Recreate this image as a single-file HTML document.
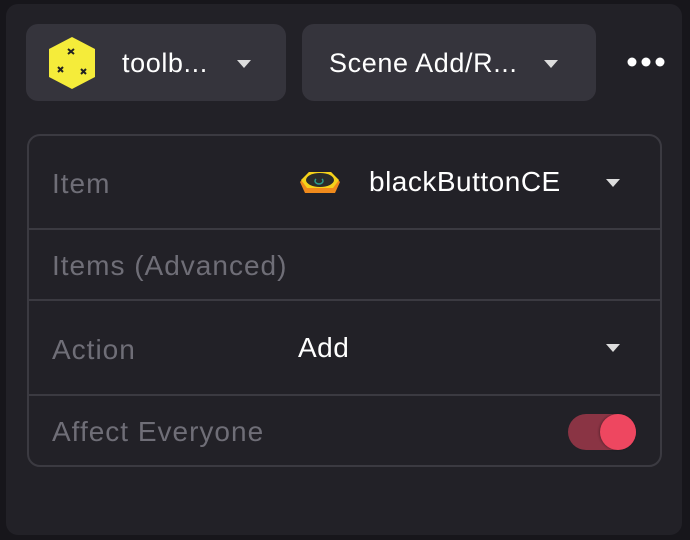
<!DOCTYPE html>
<html><head><style>
*{margin:0;padding:0;box-sizing:border-box}
body{width:690px;height:540px;background:#17161b;font-family:"Liberation Sans",Arial,sans-serif;position:relative;overflow:hidden}
.panel{position:absolute;left:6px;top:4px;width:676px;height:531px;background:#222127;border-radius:12px}
.btn{position:absolute;top:24px;height:77px;background:#35343c;border-radius:12px;color:#fff;font-size:27px;letter-spacing:.6px}
.tri{position:absolute;width:0;height:0;border-left:7px solid transparent;border-right:7px solid transparent;border-top:8px solid #ddd}
.t{position:absolute;white-space:nowrap}
.card{position:absolute;left:27px;top:134px;width:635px;height:333px;border:2px solid #3b3a41;border-radius:13px}
.div{position:absolute;left:27px;width:635px;height:2px;background:#3b3a41}
.lab{position:absolute;left:52px;color:#6f6e77;font-size:28px;letter-spacing:1px;white-space:nowrap}
</style></head><body>
<div class="panel"></div>
<div class="btn" style="left:26px;width:260px">
 <svg style="position:absolute;left:20px;top:11px" width="52" height="56" viewBox="0 0 52 56">
  <polygon points="26,2 49,14 49,42 26,54 3,42 3,14" fill="#f5ec3a"/>
  <path d="M22 14l6 5M28 14l-6 5M12 32l5 5M17 32l-5 5M35 34l5 5M40 34l-5 5" stroke="#222" stroke-width="2"/>
 </svg>
 <span class="t" style="left:96px;top:24px">toolb...</span>
 <div class="tri" style="left:211px;top:36px"></div>
</div>
<div class="btn" style="left:302px;width:294px">
 <span class="t" style="left:27px;top:24px">Scene Add/R...</span>
 <div class="tri" style="left:242px;top:36px"></div>
</div>
<svg style="position:absolute;left:626px;top:56px" width="40" height="12"><circle cx="6" cy="6" r="4.5" fill="#fff"/><circle cx="20" cy="6" r="4.5" fill="#fff"/><circle cx="34" cy="6" r="4.5" fill="#fff"/></svg>
<div class="card"></div>
<div class="div" style="top:228px"></div>
<div class="div" style="top:299px"></div>
<div class="div" style="top:394px"></div>
<span class="lab" style="top:168px">Item</span>
<svg style="position:absolute;left:299px;top:168px" width="42" height="30" viewBox="0 0 42 30">
 <polygon points="10,4 32,4 41,14 36,25 6,25 1,14" fill="#f08a1c"/>
 <polygon points="10,4 32,4 40,12 34,20 8,20 2,12" fill="#f5d21a"/>
 <ellipse cx="21" cy="12" rx="14" ry="7" fill="#2a2c2b"/>
 <path d="M17 11a4 3 0 1 0 6 0" stroke="#2a9c8c" stroke-width="1.5" fill="none"/>
</svg>
<span class="t" style="left:369px;top:166px;color:#fff;font-size:28px;letter-spacing:.5px">blackButtonCE</span>
<div class="tri" style="left:606px;top:179px"></div>
<span class="lab" style="top:250px">Items (Advanced)</span>
<span class="lab" style="top:334px">Action</span>
<span class="t" style="left:298px;top:332px;color:#fff;font-size:28px;letter-spacing:.5px">Add</span>
<div class="tri" style="left:606px;top:344px"></div>
<span class="lab" style="top:416px">Affect Everyone</span>
<div style="position:absolute;left:568px;top:414px;width:68px;height:36px;border-radius:18px;background:#8a3444"></div>
<div style="position:absolute;left:600px;top:414px;width:36px;height:36px;border-radius:50%;background:#ee4760;box-shadow:-1px 0 2px rgba(0,0,0,.3)"></div>
</body></html>
